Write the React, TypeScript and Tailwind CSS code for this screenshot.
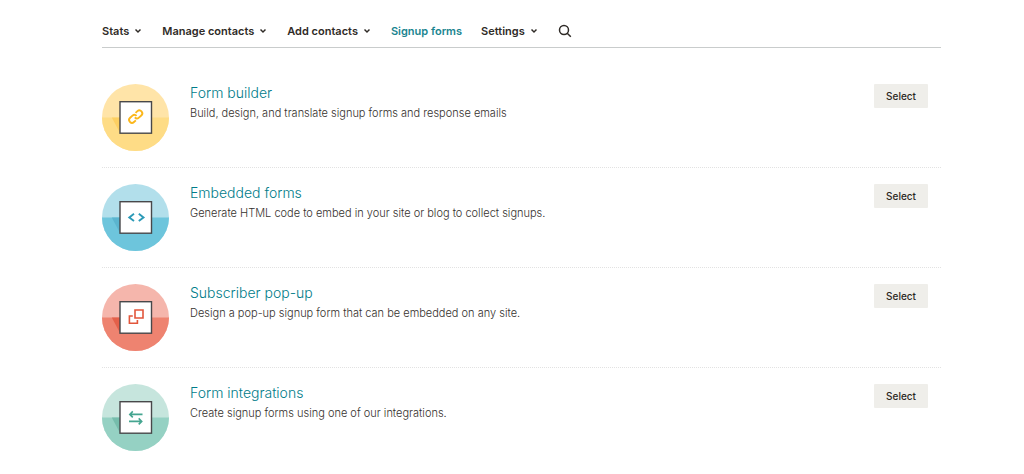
import type { ReactNode } from "react";
import clsx from "clsx";

type FormOption = {
  title: string;
  description: string;
  top: string;
  bottom: string;
  shade: string;
  accent: string;
  glyph: ReactNode;
};

const navItems = [
  { name: "Stats", hasMenu: true },
  { name: "Manage contacts", hasMenu: true },
  { name: "Add contacts", hasMenu: true },
  { name: "Signup forms", isActive: true },
  { name: "Settings", hasMenu: true },
];

const formOptions: FormOption[] = [
  {
    title: "Form builder",
    description: "Build, design, and translate signup forms and response emails",
    top: "#ffe4a8",
    bottom: "#fedc86",
    shade: "#fdcf62",
    accent: "#fbb71c",
    glyph: (
      <g transform="translate(33.7 32.6) rotate(-42)">
        <path d="M-2.4 2.9H-4.9a2.9 2.9 0 0 1 0-5.8h3.2A2.9 2.9 0 0 1 1.2 0" />
        <path d="M2.4-2.9H4.9a2.9 2.9 0 0 1 0 5.8H1.7A2.9 2.9 0 0 1-1.2 0" />
      </g>
    ),
  },
  {
    title: "Embedded forms",
    description:
      "Generate HTML code to embed in your site or blog to collect signups.",
    top: "#b2dfeb",
    bottom: "#6dc5dc",
    shade: "#5bb5cf",
    accent: "#2c9ab7",
    glyph: <path d="m32 29.8-4.7 3.6 4.7 3.6M36.8 29.8l4.7 3.6-4.7 3.6" />,
  },
  {
    title: "Subscriber pop-up",
    description:
      "Design a pop-up signup form that can be embedded on any site.",
    top: "#f5b6ac",
    bottom: "#ee8370",
    shade: "#e4604a",
    accent: "#e2563b",
    glyph: (
      <g strokeWidth="1.6">
        <path d="M33 26h8v8h-8z" />
        <path d="M30.8 32h-3.4v7.3h8v-3.4" />
      </g>
    ),
  },
  {
    title: "Form integrations",
    description: "Create signup forms using one of our integrations.",
    top: "#c6e5dd",
    bottom: "#95d1c3",
    shade: "#76bdac",
    accent: "#45a590",
    glyph: (
      <g strokeWidth="1.6">
        <path d="M40.5 30.4H27.8M30.8 27.4l-3 3 3 3" />
        <path d="M27 37.4h12.7M36.7 34.4l3 3-3 3" />
      </g>
    ),
  },
];

const Chevron = () => (
  <svg viewBox="0 0 10 8" className="h-2 w-2.5" fill="none" aria-hidden="true">
    <path d="m2.5 2.5 2.5 2.6 2.5-2.6" stroke="currentColor" strokeWidth="1.4" />
  </svg>
);

const OptionIcon = ({ option }: { option: FormOption }) => (
  <svg viewBox="0 0 67 67" className="size-[67px] shrink-0" aria-hidden="true">
    <circle cx="33.5" cy="33.5" r="33.5" fill={option.top} />
    <path d="M0 33.5a33.5 33.5 0 0 0 67 0z" fill={option.bottom} />
    <path d="M9.8 33.5H18V49z" fill={option.shade} />
    <rect
      x="18"
      y="17.7"
      width="31.5"
      height="31.5"
      fill="#fff"
      stroke="#48484a"
      strokeWidth="1.4"
    />
    <g fill="none" stroke={option.accent} strokeWidth="1.9">
      {option.glyph}
    </g>
  </svg>
);

const FormOptionRow = ({ option }: { option: FormOption }) => (
  <li className="flex items-start border-b border-dotted border-[#e2e2e2] py-4 pr-[13px] last:border-b-0">
    <OptionIcon option={option} />
    <div className="ml-[21px] flex-1">
      <h2 className="text-sm leading-[18px] font-light text-[#007c89]">
        <a href="#">{option.title}</a>
      </h2>
      <p className="mt-[3px] text-[11px] leading-4 font-light text-[#35312d]">
        {option.description}
      </p>
    </div>
    <button
      type="button"
      className="h-6 w-[54px] rounded-[1px] bg-[#efeeea] text-[10px] font-medium text-[#2b2723]"
    >
      Select
    </button>
  </li>
);

export default function App() {
  return (
    <div className="bg-white pr-[83px] pl-[102px] font-['Inter',sans-serif]">
      <nav className="flex h-12 items-end border-b border-[#c9cccc] pb-2 text-[11px] leading-4 font-semibold text-[#2f2b27]">
        <ul className="flex">
          {navItems.map((item) => (
            <li key={item.name} className="mr-[19px]">
              <a
                href="#"
                className={clsx(
                  "flex items-center gap-1",
                  item.isActive && "text-[#1a8590]",
                )}
              >
                {item.name}
                {item.hasMenu && <Chevron />}
              </a>
            </li>
          ))}
        </ul>
        <button type="button" aria-label="Search" className="mb-px">
          <svg viewBox="0 0 14 14" className="size-3.5" fill="none">
            <circle cx="6" cy="6" r="4.5" stroke="currentColor" strokeWidth="1.5" />
            <path d="m9.2 9.2 3.6 3.6" stroke="currentColor" strokeWidth="1.5" />
          </svg>
        </button>
      </nav>
      <ul className="pt-5">
        {formOptions.map((option) => (
          <FormOptionRow key={option.title} option={option} />
        ))}
      </ul>
    </div>
  );
}
